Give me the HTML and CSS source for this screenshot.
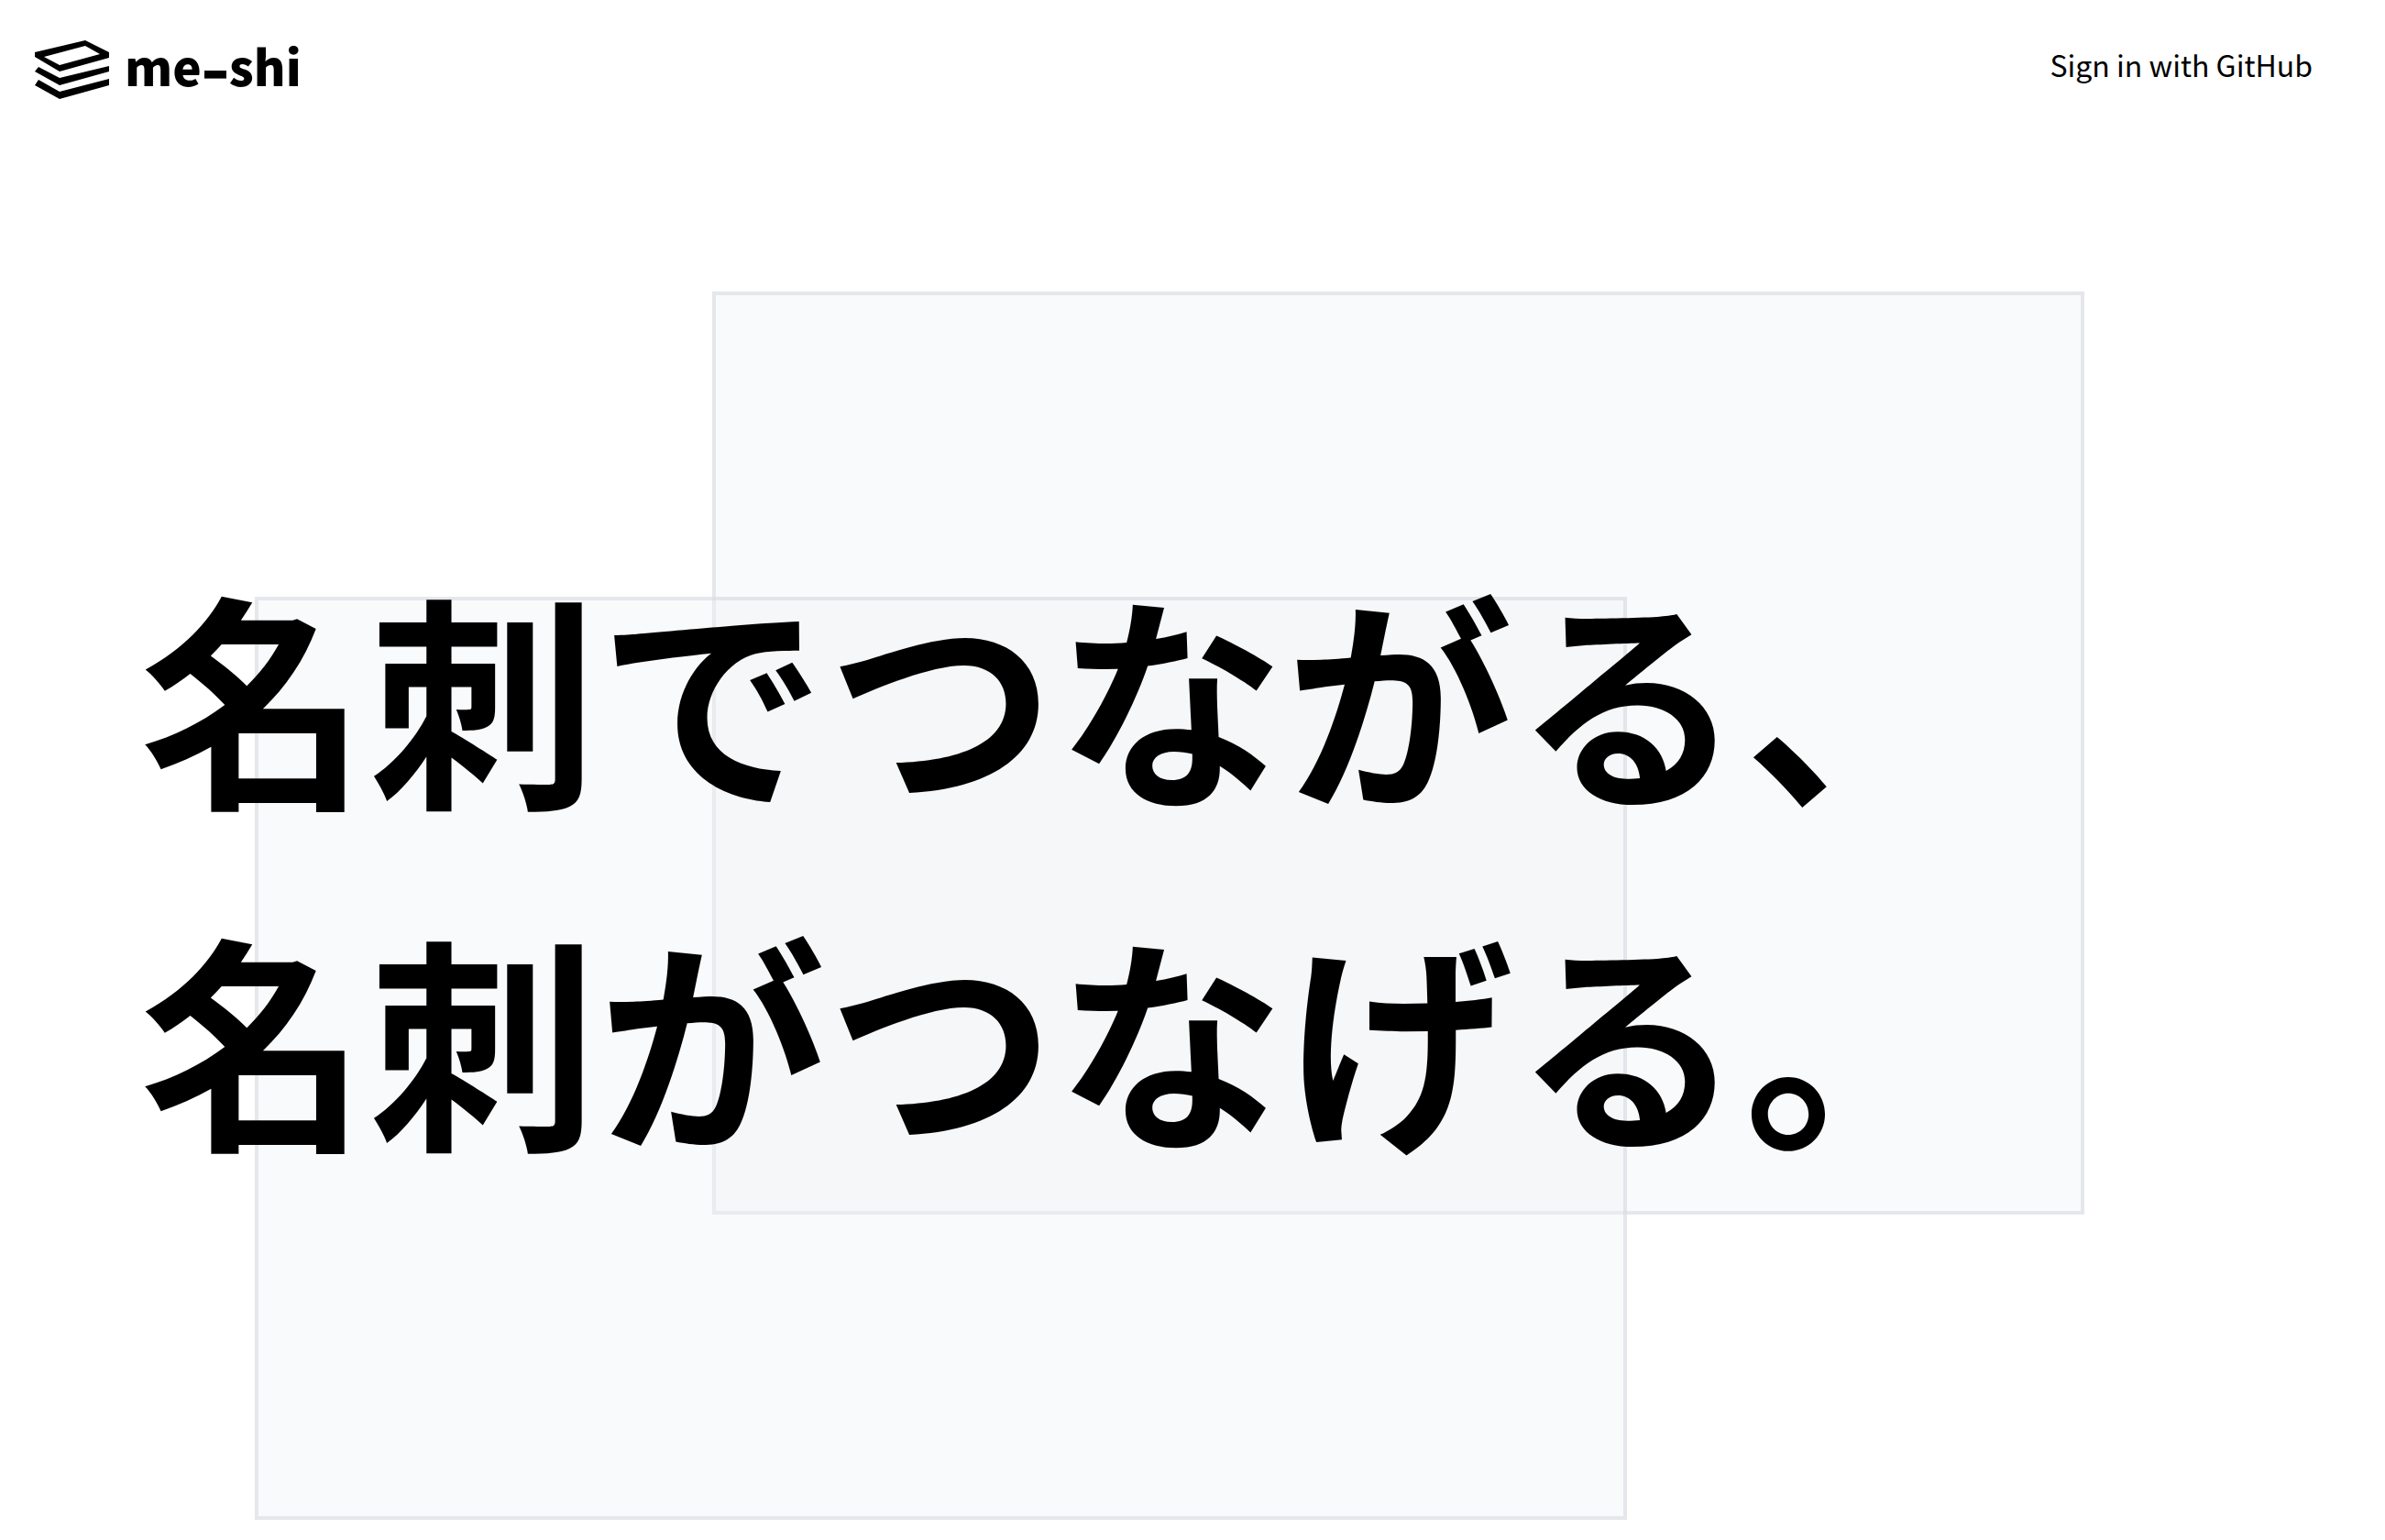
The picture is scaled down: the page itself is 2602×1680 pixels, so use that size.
FILE: index.html
```html
<!DOCTYPE html>
<html lang="ja">
<head>
<meta charset="utf-8">
<title>me-shi</title>
<link rel="stylesheet" href="styles.css">
</head>
<body>
<div class="page">
  <header class="header">
    <a class="brand" href="#">
      <svg class="brand-icon" viewBox="36 42 86 68" aria-hidden="true">
        <path fill-rule="evenodd" d="M38 57L93 44L119 57V63L65 78L38 62ZM48 62L65 71L109 59L93 50Z"/>
        <path d="M42 73L65 85L119 72V78L65 93L38 78Z"/>
        <path d="M42 87L65 100L119 86V93L65 108L38 93Z"/>
      </svg>
      <span class="brand-name">me<span class="brand-dash">-</span>shi</span>
    </a>
    <a class="signin" href="#">Sign in with GitHub</a>
  </header>
  <main class="hero">
    <div class="card card-back"></div>
    <div class="card card-front"></div>
    <h1 class="headline">名刺でつながる、<br>名刺がつなげる。</h1>
  </main>
</div>
</body>
</html>
```
FILE: styles.css
```css
* { box-sizing: border-box; }
html, body { margin: 0; padding: 0; background: #fff; }
body { font-family: "Noto Sans CJK JP", "Noto Sans", sans-serif; color: #000; }
a { color: inherit; text-decoration: none; }
.page { position: relative; width: 2602px; height: 1680px; overflow: hidden; }
.header { position: relative; z-index: 1; display: flex; justify-content: space-between; align-items: center; height: 152px; padding: 0 79px 0 36px; }
.brand { display: flex; align-items: center; gap: 14px; }
.brand-icon { width: 86px; height: 68px; display: block; }
.brand-name { font-size: 53px; font-weight: 900; line-height: 1; margin-bottom: 10px; }
.brand-dash { display: inline-block; width: 30px; text-align: center; transform: scale(1.6, 1.3); }
.signin { font-size: 32px; line-height: 1; margin-bottom: 12px; }
.hero { display: flex; align-items: flex-start; padding: 568px 0 0 153px; position: absolute; inset: 0; }
.card { position: absolute; width: 1497px; height: 1007px; border: 4px solid rgba(209, 212, 219, 0.5); background: rgba(240, 243, 245, 0.4); }
.card-back { left: 777px; top: 318px; }
.card-front { left: 278px; top: 651px; }
.headline { position: relative; margin: 0; font-size: 248px; letter-spacing: 2px; font-weight: 700; line-height: 373px; white-space: nowrap; }
```
